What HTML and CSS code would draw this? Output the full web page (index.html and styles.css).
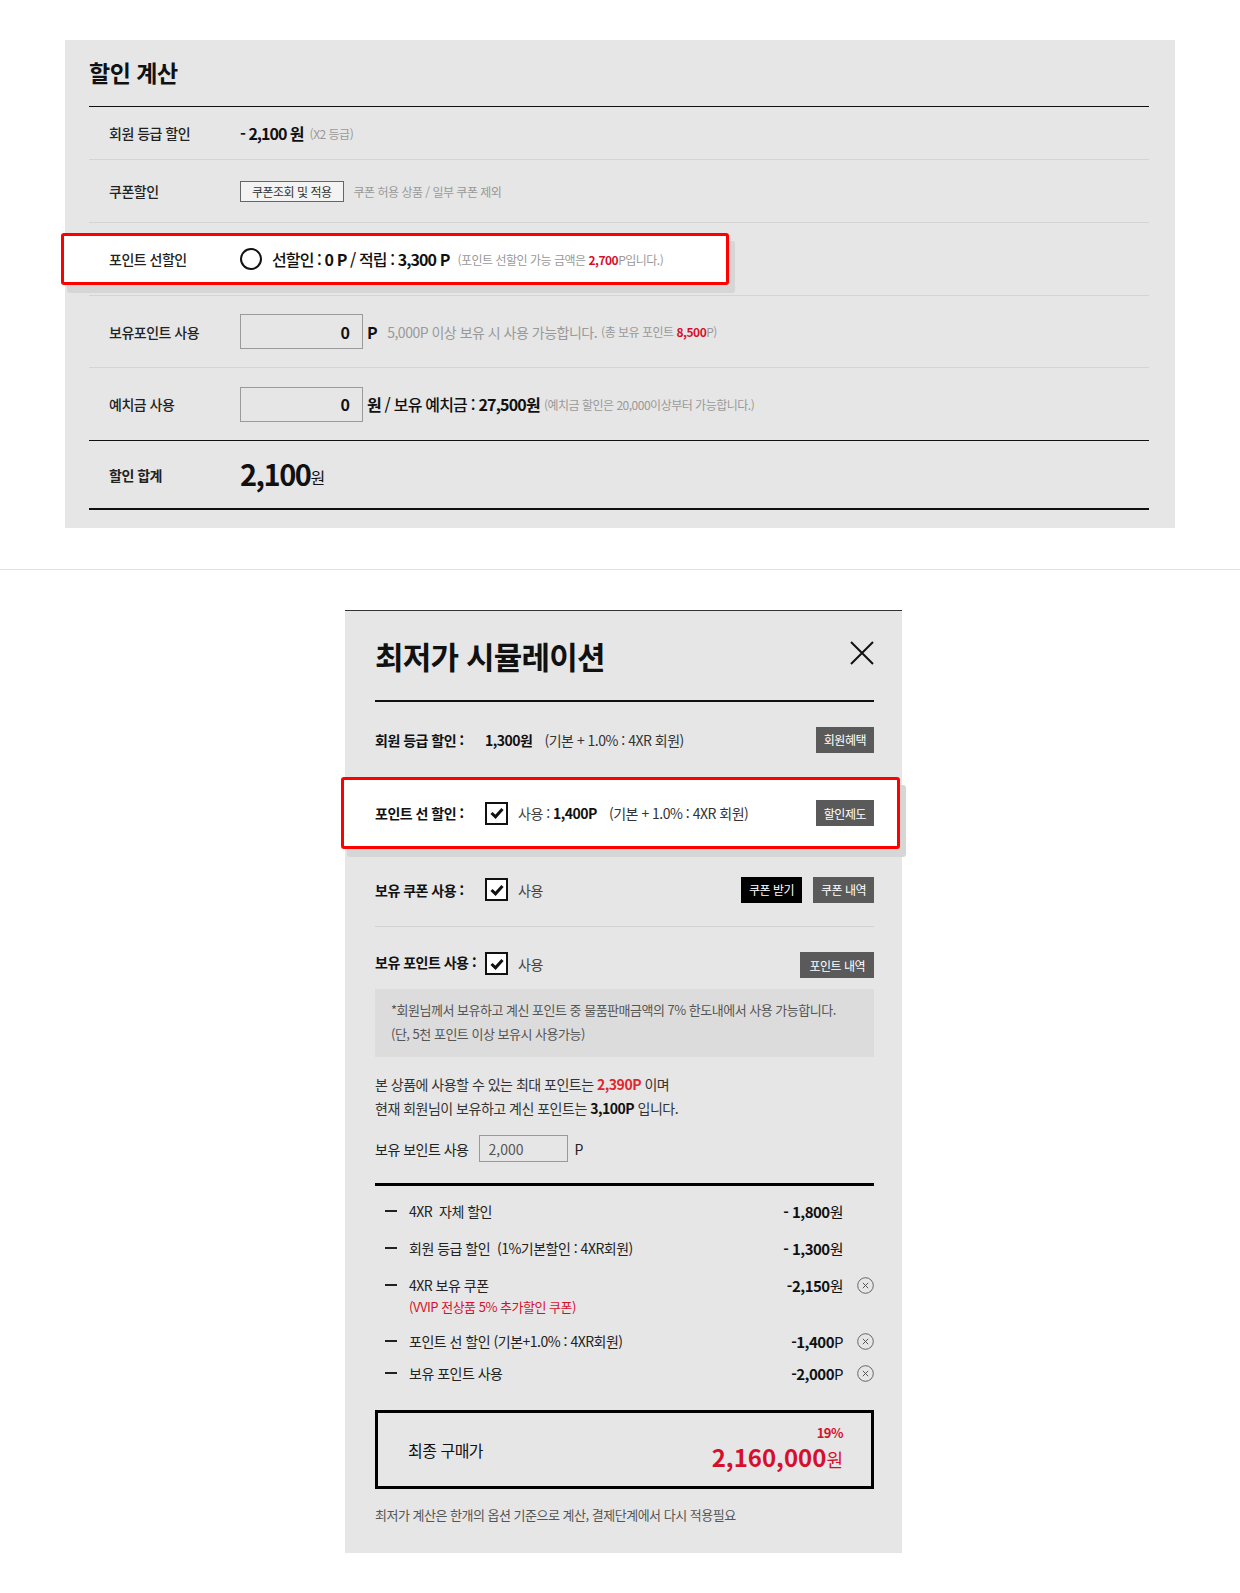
FILE: index.html
```html
<!DOCTYPE html>
<html lang="ko">
<head>
    <meta charset="UTF-8">
    <meta name="viewport" content="width=device-width, initial-scale=1.0">
    <title>할인 계산 / 최저가 시뮬레이션</title>
    <link rel="stylesheet" href="styles.css">
</head>
<body>
    <div class="calc">
        <h2 class="calc-title">할인 계산</h2>

        <div class="calc-row row-grade">
            <div class="calc-label">회원 등급 할인</div>
            <div class="calc-value"><b class="amount">- 2,100 원</b><span class="note">(X2 등급)</span></div>
        </div>
        <div class="calc-row row-coupon">
            <div class="calc-label">쿠폰할인</div>
            <div class="calc-value">
                <button type="button" class="btn-line">쿠폰조회 및 적용</button>
                <span class="note">쿠폰 허용 상품 / 일부 쿠폰 제외</span>
            </div>
        </div>
        <div class="calc-row row-pre">
            <div class="calc-hl">
                <div class="calc-label">포인트 선할인</div>
                <div class="calc-value">
                    <span class="radio"></span>
                    <span class="pre-text">선할인 : <b>0 P</b> / 적립 : <b>3,300 P</b></span>
                    <span class="note">(포인트 선할인 가능 금액은 <em class="red">2,700</em>P입니다.)</span>
                </div>
            </div>
        </div>
        <div class="calc-row row-input">
            <div class="calc-label">보유포인트 사용</div>
            <div class="calc-value">
                <input type="text" class="num-input" value="0">
                <b class="unit">P</b>
                <span class="hint">5,000P 이상 보유 시 사용 가능합니다.</span>
                <span class="note tight">(총 보유 포인트 <em class="red">8,500</em>P)</span>
            </div>
        </div>
        <div class="calc-row row-input last">
            <div class="calc-label">예치금 사용</div>
            <div class="calc-value">
                <input type="text" class="num-input" value="0">
                <span class="deposit"><b>원</b> / 보유 예치금 : <b>27,500원</b></span>
                <span class="note tight">(예치금 할인은 20,000이상부터 가능합니다.)</span>
            </div>
        </div>
        <div class="calc-total">
            <div class="calc-label">할인 합계</div>
            <div class="calc-value"><b class="total-num">2,100</b><span class="total-won">원</span></div>
        </div>
    </div>

    <hr class="divider">

    <div class="sim">
        <div class="sim-head">
            <h2 class="sim-title">최저가 시뮬레이션</h2>
            <button type="button" class="sim-close" aria-label="닫기">
                <svg width="24" height="24" viewBox="0 0 24 24"><path d="M1 1 L23 23 M23 1 L1 23" stroke="#111" stroke-width="2" fill="none"/></svg>
            </button>
        </div>

        <div class="sim-row row-a">
            <div class="sim-label">회원 등급 할인 :</div>
            <div class="sim-value"><b>1,300원</b><span class="gap-l">(기본 + 1.0% : 4XR 회원)</span></div>
            <button type="button" class="btn-gray">회원혜택</button>
        </div>

        <div class="sim-row row-b">
            <div class="sim-hl">
                <div class="sim-label">포인트 선 할인 :</div>
                <div class="sim-value">
                    <span class="check"><svg width="18" height="18" viewBox="0 0 18 18"><path d="M3.5 9 L7.5 12.8 L14.5 5" stroke="#111" stroke-width="3" fill="none"/></svg></span>
                    <span class="use">사용 : <b>1,400P</b></span>
                    <span class="gap-l">(기본 + 1.0% : 4XR 회원)</span>
                </div>
                <button type="button" class="btn-gray">할인제도</button>
            </div>
        </div>

        <div class="sim-row row-c">
            <div class="sim-label">보유 쿠폰 사용 :</div>
            <div class="sim-value">
                <span class="check"><svg width="18" height="18" viewBox="0 0 18 18"><path d="M3.5 9 L7.5 12.8 L14.5 5" stroke="#111" stroke-width="3" fill="none"/></svg></span>
                <span class="use">사용</span>
            </div>
            <button type="button" class="btn-black">쿠폰 받기</button>
            <button type="button" class="btn-gray">쿠폰 내역</button>
        </div>

        <div class="sim-row row-d">
            <div class="sim-label">보유 포인트 사용 :</div>
            <div class="sim-value">
                <span class="check"><svg width="18" height="18" viewBox="0 0 18 18"><path d="M3.5 9 L7.5 12.8 L14.5 5" stroke="#111" stroke-width="3" fill="none"/></svg></span>
                <span class="use">사용</span>
            </div>
            <button type="button" class="btn-gray wide">포인트 내역</button>
        </div>

        <div class="sim-info">
            *회원님께서 보유하고 계신 포인트 중 물품판매금액의 7% 한도내에서 사용 가능합니다.<br>
            (단, 5천 포인트 이상 보유시 사용가능)
        </div>

        <p class="sim-text">
            본 상품에 사용할 수 있는 최대 포인트는 <b class="red">2,390P</b> 이며<br>
            현재 회원님이 보유하고 계신 포인트는 <b>3,100P</b> 입니다.
        </p>

        <div class="sim-point">
            <span>보유 보인트 사용</span>
            <input type="text" class="point-input" value="2,000">
            <span>P</span>
        </div>

        <ul class="sum-list">
            <li class="sum-item">
                <span class="dash"></span>
                <span class="sum-name">4XR&nbsp; 자체 할인</span>
                <span class="sum-price">- 1,800<span class="won">원</span></span>
                <span class="sum-del"></span>
            </li>
            <li class="sum-item">
                <span class="dash"></span>
                <span class="sum-name">회원 등급 할인&nbsp; (1%기본할인 : 4XR회원)</span>
                <span class="sum-price">- 1,300<span class="won">원</span></span>
                <span class="sum-del"></span>
            </li>
            <li class="sum-item">
                <span class="dash"></span>
                <span class="sum-name">4XR 보유 쿠폰<small class="sum-sub">(VVIP 전상품 5% 추가할인 쿠폰)</small></span>
                <span class="sum-price">-2,150<span class="won">원</span></span>
                <span class="sum-del"><svg width="17" height="17" viewBox="0 0 17 17"><circle cx="8.5" cy="8.5" r="7.8" stroke="#666" stroke-width="1" fill="none"/><path d="M5.8 5.8 L11.2 11.2 M11.2 5.8 L5.8 11.2" stroke="#555" stroke-width="1" fill="none"/></svg></span>
            </li>
            <li class="sum-item">
                <span class="dash"></span>
                <span class="sum-name">포인트 선 할인 (기본+1.0% : 4XR회원)</span>
                <span class="sum-price">-1,400<span class="won">P</span></span>
                <span class="sum-del"><svg width="17" height="17" viewBox="0 0 17 17"><circle cx="8.5" cy="8.5" r="7.8" stroke="#666" stroke-width="1" fill="none"/><path d="M5.8 5.8 L11.2 11.2 M11.2 5.8 L5.8 11.2" stroke="#555" stroke-width="1" fill="none"/></svg></span>
            </li>
            <li class="sum-item close">
                <span class="dash"></span>
                <span class="sum-name">보유 포인트 사용</span>
                <span class="sum-price">-2,000<span class="won">P</span></span>
                <span class="sum-del"><svg width="17" height="17" viewBox="0 0 17 17"><circle cx="8.5" cy="8.5" r="7.8" stroke="#666" stroke-width="1" fill="none"/><path d="M5.8 5.8 L11.2 11.2 M11.2 5.8 L5.8 11.2" stroke="#555" stroke-width="1" fill="none"/></svg></span>
            </li>
        </ul>

        <div class="final">
            <div class="final-label">최종 구매가</div>
            <div class="final-price">
                <div class="final-rate">19%</div>
                <div class="final-num">2,160,000<span class="won">원</span></div>
            </div>
        </div>

        <p class="sim-foot">최저가 계산은 한개의 옵션 기준으로 계산, 결제단계에서 다시 적용필요</p>
    </div>
</body>
</html>
```

FILE: styles.css
```css
body {
    margin: 0;
    background-color: #fff;
    font-family: "Noto Sans CJK KR", "Noto Sans", sans-serif;
    color: #222;
    letter-spacing: -0.5px;
}
b {
    font-weight: 700;
}
em {
    font-style: normal;
}
.red {
    color: #d6102c;
    font-weight: 700;
}

/* 할인 계산 */
.calc {
    width: 1110px;
    box-sizing: border-box;
    margin: 40px 0 0 65px;
    padding: 0 26px 18px 24px;
    background-color: #e6e6e6;
}
.calc-title {
    display: flex;
    align-items: center;
    height: 67px;
    margin: 0;
    padding-bottom: 2px;
    box-sizing: border-box;
    border-bottom: 1px solid #111;
    font-size: 23px;
    font-weight: 700;
    color: #111;
}
.calc-row {
    display: flex;
    align-items: center;
    border-bottom: 1px solid #d4d4d4;
}
.calc-row.last {
    border-bottom: none;
}
.row-grade { height: 52px; }
.row-coupon { height: 62px; }
.row-pre { height: 72px; }
.row-input { height: 71px; }
.row-input.last { height: 72px; }
.calc-label {
    flex: 0 0 151px;
    box-sizing: border-box;
    padding-left: 20px;
    font-size: 14px;
    font-weight: 500;
    color: #222;
}
.calc-value {
    display: flex;
    align-items: center;
    font-size: 16px;
}
.amount {
    font-size: 16px;
    letter-spacing: -1px;
    color: #111;
}
.note {
    margin-left: 6px;
    font-size: 12px;
    color: #999;
}
.note.tight {
    margin-left: 4px;
}
.btn-line {
    height: 21px;
    padding: 0 11px;
    border: 1px solid #666;
    background-color: #f3f3f3;
    font-family: inherit;
    font-size: 12px;
    letter-spacing: -0.5px;
    color: #333;
    cursor: pointer;
}
.btn-line + .note {
    margin-left: 10px;
}
.calc-hl {
    display: flex;
    align-items: center;
    box-sizing: border-box;
    width: 668px;
    height: 52px;
    margin-left: -28px;
    padding-left: 25px;
    border: 3px solid #ff0000;
    border-radius: 3px;
    background-color: #fff;
    box-shadow: 6px 8px 0 #d6d6d6;
}
.radio {
    display: inline-block;
    width: 18px;
    height: 18px;
    border: 2px solid #111;
    border-radius: 50%;
    background-color: #fff;
}
.pre-text {
    margin-left: 10px;
    font-size: 16px;
    font-weight: 500;
    letter-spacing: -0.9px;
    color: #111;
}
.pre-text + .note {
    margin-left: 8px;
}
.num-input {
    width: 123px;
    height: 35px;
    box-sizing: border-box;
    padding: 0 12px;
    border: 1px solid #9a9a9a;
    background-color: #e6e6e6;
    font-family: inherit;
    font-size: 16px;
    font-weight: 700;
    text-align: right;
    color: #111;
}
.unit {
    margin-left: 4px;
    font-size: 16px;
    color: #111;
}
.hint {
    margin-left: 10px;
    font-size: 14px;
    color: #999;
}
.deposit {
    margin-left: 4px;
    font-size: 16px;
    font-weight: 500;
    letter-spacing: -0.8px;
    color: #111;
}
.calc-total {
    display: flex;
    align-items: center;
    height: 67px;
    border-top: 1px solid #111;
    border-bottom: 2px solid #111;
}
.calc-total .calc-label {
    font-weight: 700;
}
.total-num {
    margin-top: -4px;
    font-size: 29px;
    letter-spacing: -1.5px;
    color: #111;
}
.total-won {
    margin-top: 4px;
    font-size: 16px;
    color: #111;
}

.divider {
    height: 0;
    margin: 41px 0 0;
    border: none;
    border-top: 1px solid #e0e0e0;
}

/* 최저가 시뮬레이션 */
.sim {
    width: 557px;
    box-sizing: border-box;
    margin: 40px 0 0 345px;
    padding: 0 28px 29px 30px;
    border-top: 1px solid #333;
    background-color: #e6e6e6;
}
.sim-head {
    display: flex;
    align-items: center;
    justify-content: space-between;
    height: 89px;
    border-bottom: 2px solid #111;
}
.sim-title {
    margin: 0;
    font-size: 31px;
    font-weight: 700;
    color: #111;
    letter-spacing: -0.8px;
}
.sim-close {
    display: flex;
    padding: 0;
    margin: -6px 0 0 0;
    border: none;
    background: none;
    cursor: pointer;
}
.sim-row {
    display: flex;
    align-items: center;
    font-size: 14px;
}
.row-a { height: 75px; }
.row-b {
    height: 75px;
    align-items: flex-start;
    border-bottom: 1px solid #cfcfcf;
}
.row-c {
    height: 73px;
    border-bottom: 1px solid #d2d2d2;
}
.row-d {
    height: 62px;
    align-items: flex-start;
    padding-top: 25px;
    box-sizing: border-box;
}
.sim-label {
    flex: 0 0 110px;
    font-size: 14px;
    font-weight: 700;
    color: #111;
}
.sim-value {
    display: flex;
    align-items: center;
    flex: 1;
    color: #333;
}
.sim-value b {
    color: #111;
}
.gap-l {
    margin-left: 12px;
}
.sim-hl {
    display: flex;
    align-items: center;
    box-sizing: border-box;
    width: 559px;
    height: 72px;
    margin: 0 -26px 0 -34px;
    padding: 0 23px 0 31px;
    border: 3px solid #ff0000;
    border-radius: 3px;
    background-color: #fff;
    box-shadow: 6px 8px 0 #d6d6d6;
}
.check {
    display: inline-flex;
    align-items: center;
    justify-content: center;
    width: 19px;
    height: 19px;
    border: 2px solid #111;
    background-color: #fff;
}
.use {
    margin-left: 10px;
    color: #444;
}
.btn-gray,
.btn-black {
    height: 26px;
    padding: 0 8px;
    border: none;
    background-color: #5a5a5a;
    font-family: inherit;
    font-size: 12px;
    letter-spacing: -0.5px;
    color: #fff;
    cursor: pointer;
}
.btn-black {
    margin-right: 11px;
    background-color: #000;
}
.btn-gray.wide {
    padding: 0 9px;
}
.sim-info {
    box-sizing: border-box;
    height: 68px;
    padding: 9px 16px 0;
    background-color: #dcdcdc;
    font-size: 13px;
    line-height: 24px;
    color: #555;
}
.sim-text {
    margin: 15px 0 0;
    font-size: 14px;
    line-height: 24px;
    color: #333;
}
.sim-text b {
    color: #111;
}
.sim-text b.red {
    color: #e0262b;
}
.sim-point {
    display: flex;
    align-items: center;
    margin-top: 15px;
    font-size: 14px;
    color: #222;
}
.point-input {
    width: 89px;
    height: 27px;
    box-sizing: border-box;
    margin: 0 7px 0 10px;
    padding: 0 9px;
    border: 1px solid #999;
    background-color: #e6e6e6;
    font-family: inherit;
    font-size: 14px;
    color: #555;
}
.sum-list {
    list-style: none;
    margin: 21px 0 0;
    padding: 13px 0 0;
    border-top: 3px solid #000;
    display: flex;
    flex-direction: column;
    gap: 13px;
}
.sum-item {
    display: flex;
    align-items: flex-start;
    font-size: 14px;
    line-height: 24px;
    color: #222;
}
.sum-item.close {
    margin-top: -5px;
}
.dash {
    flex: 0 0 12px;
    height: 2px;
    margin: 11px 0 0 10px;
    background-color: #222;
}
.sum-name {
    flex: 1;
    margin-left: 12px;
}
.sum-sub {
    display: block;
    font-size: 13px;
    line-height: 19px;
    color: #d6102c;
}
.sum-price {
    margin-top: 2px;
    font-size: 15px;
    font-weight: 700;
    line-height: 22px;
    color: #111;
}
.won {
    font-weight: 400;
}
.sum-del {
    display: flex;
    flex: 0 0 17px;
    justify-content: flex-end;
    margin: 4px 0 0 14px;
}
.final {
    display: flex;
    align-items: center;
    justify-content: space-between;
    height: 79px;
    box-sizing: border-box;
    margin-top: 25px;
    padding: 0 28px 0 30px;
    border: 3px solid #000;
}
.final-label {
    font-size: 16px;
    color: #111;
}
.final-price {
    text-align: right;
    color: #d6102c;
}
.final-rate {
    font-size: 13px;
    font-weight: 700;
    line-height: 16px;
}
.final-num {
    font-size: 24px;
    font-weight: 700;
    line-height: 32px;
    letter-spacing: 0;
}
.final-num .won {
    font-size: 18px;
}
.sim-foot {
    margin: 17px 0 0;
    font-size: 13px;
    line-height: 18px;
    color: #555;
}
```
